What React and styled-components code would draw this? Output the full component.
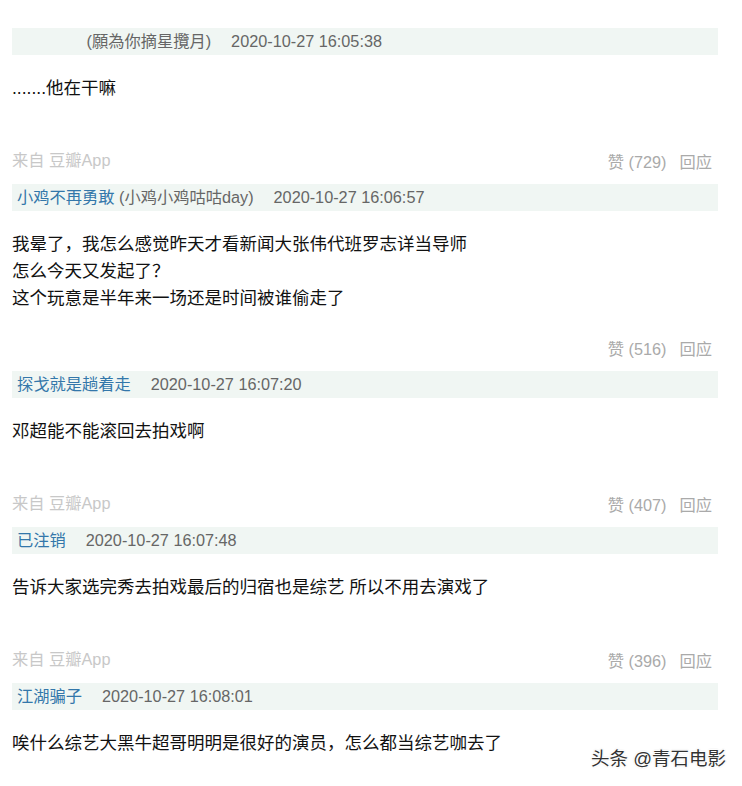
import React from "react";
import styled, { createGlobalStyle } from "styled-components";

const GlobalStyle = createGlobalStyle`
  html, body {
    margin: 0;
    padding: 0;
    background: #fff;
  }
  body {
    font-family: "Liberation Sans", Arial, "Noto Sans CJK SC", sans-serif;
  }
`;

const comments = [
  {
    name: "\u3000\u3000\u3000\u3000",
    nick: "願為你摘星攬月",
    time: "2020-10-27 16:05:38",
    lines: [".......他在干嘛"],
    source: true,
    votes: 729,
  },
  {
    name: "小鸡不再勇敢",
    nick: "小鸡小鸡咕咕day",
    time: "2020-10-27 16:06:57",
    lines: [
      "我晕了，我怎么感觉昨天才看新闻大张伟代班罗志详当导师",
      "怎么今天又发起了？",
      "这个玩意是半年来一场还是时间被谁偷走了",
    ],
    source: false,
    votes: 516,
  },
  {
    name: "探戈就是趟着走",
    time: "2020-10-27 16:07:20",
    lines: ["邓超能不能滚回去拍戏啊"],
    source: true,
    votes: 407,
  },
  {
    name: "已注销",
    time: "2020-10-27 16:07:48",
    lines: ["告诉大家选完秀去拍戏最后的归宿也是综艺 所以不用去演戏了"],
    source: true,
    votes: 396,
  },
  {
    name: "江湖骗子",
    time: "2020-10-27 16:08:01",
    lines: ["唉什么综艺大黑牛超哥明明是很好的演员，怎么都当综艺咖去了"],
  },
];

export default function App() {
  return (
    <>
      <GlobalStyle />
      <Page>
        {comments.map((c, i) => (
          <Comment key={i}>
            <Header>
              <Name>{c.name}</Name>
              {c.nick && <Nick>&nbsp;({c.nick})</Nick>}
              <Time>{c.time}</Time>
            </Header>
            <Content>
              {c.lines.map((l, j) => (
                <div key={j}>{l}</div>
              ))}
            </Content>
            {c.votes != null && (
              <Footer $withSource={c.source}>
                <Source>{c.source ? "来自 豆瓣App" : ""}</Source>
                <Actions>
                  <span>赞 ({c.votes})</span>
                  <span>回应</span>
                </Actions>
              </Footer>
            )}
          </Comment>
        ))}
        <Watermark>头条 @青石电影</Watermark>
      </Page>
    </>
  );
}

const Page = styled.div`
  position: relative;
  box-sizing: border-box;
  width: 742px;
  min-height: 786px;
  padding: 28px 24px 0 12px;
`;

const Comment = styled.div`
  display: flex;
  flex-direction: column;
`;

const Header = styled.div`
  display: flex;
  align-items: center;
  height: 27px;
  padding-left: 5px;
  background: #f0f6f3;
  font-size: 16.25px;
  line-height: 27px;
  color: #666;
  white-space: pre;
`;

const Name = styled.span`
  color: #3377aa;
`;

const Nick = styled.span`
  color: #666;
`;

const Time = styled.span`
  margin-left: 20px;
  color: #666;
`;

const Content = styled.div`
  margin-top: 19.5px;
  font-size: 17.5px;
  line-height: 27px;
  color: #111;
`;

const Footer = styled.div`
  display: flex;
  justify-content: space-between;
  align-items: flex-start;
  margin-top: ${(p) => (p.$withSource ? "48.5px" : "25.5px")};
  margin-bottom: 12px;
  font-size: 16.25px;
  line-height: 20px;
`;

const Source = styled.div`
  color: #c8c8c8;
`;

const Actions = styled.div`
  display: flex;
  gap: 13px;
  padding-top: 2px;
  padding-right: 6px;
  color: #aaa;
`;

const Watermark = styled.div`
  position: absolute;
  right: 16px;
  bottom: 16px;
  font-size: 18.5px;
  line-height: 22px;
  color: #333;
  text-shadow: 1px 1px 1px #fff, -1px -1px 1px #fff, 1px -1px 1px #fff,
    -1px 1px 1px #fff, 0 0 2px #888;
`;
